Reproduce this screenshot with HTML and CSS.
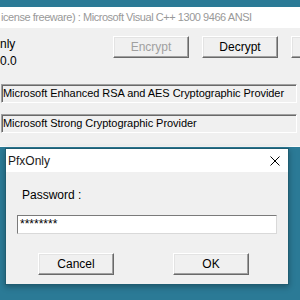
FILE: index.html
```html
<!doctype html>
<html lang="en">
<head>
    <meta charset="UTF-8">
    <title>PfxOnly</title>
    <link rel="stylesheet" href="styles.css">
</head>
<body>
    <div class="desktop">
        <!-- main window, only partly visible -->
        <div class="main-win">
            <div class="main-title">icense freeware) : Microsoft Visual C++ 1300 9466 ANSI</div>
            <div class="main-body">
                <div class="top-row">
                    <div class="info">
                        <div>nly</div>
                        <div>0.0</div>
                    </div>
                    <div class="btn btn-disabled">Encrypt</div>
                    <div class="btn">Decrypt</div>
                    <div class="btn btn-cut"></div>
                </div>
                <div class="field">Microsoft Enhanced RSA and AES Cryptographic Provider</div>
                <div class="field field-second">Microsoft Strong Cryptographic Provider</div>
            </div>
        </div>

        <!-- password dialog -->
        <div class="dialog">
            <div class="dialog-title">
                <span>PfxOnly</span>
                <svg class="close" width="10" height="10" viewBox="0 0 10 10">
                    <path d="M0.5 0.5 L9.5 9.5 M9.5 0.5 L0.5 9.5" stroke="#000" stroke-width="1" fill="none"/>
                </svg>
            </div>
            <div class="dialog-body">
                <div class="label">Password :</div>
                <div class="edit">********</div>
                <div class="dialog-buttons">
                    <div class="btn">Cancel</div>
                    <div class="btn">OK</div>
                </div>
            </div>
        </div>
    </div>
</body>
</html>
```

FILE: styles.css
```css
html, body {
    margin: 0;
    padding: 0;
}

body {
    width: 300px;
    height: 300px;
    overflow: hidden;
    background-color: #2b7a96;
    font-family: "Liberation Sans", Arial, sans-serif;
    font-size: 12px;
    color: #000;
}

.desktop {
    position: relative;
    width: 300px;
    height: 300px;
}

.main-win {
    padding-top: 7px;
    width: 300px;
    overflow: hidden;
}

/* inactive title bar, text runs off the left edge */
.main-title {
    height: 21px;
    line-height: 21px;
    background-color: #fff;
    color: #999;
    padding-left: 1px;
    white-space: nowrap;
    font-size: 11px;
    letter-spacing: -0.45px;
}

.main-body {
    height: 118px;
    background-color: #f0f0f0;
    border-bottom: 1px solid #fafafa;
    overflow: hidden;
}

.top-row {
    display: flex;
    margin-top: 8px;
    white-space: nowrap;
}

.info {
    flex: none;
    width: 113px;
    line-height: 17px;
}

.btn {
    flex: none;
    width: 76px;
    height: 22px;
    box-sizing: border-box;
    line-height: 20px;
    text-align: center;
    background-color: #f0f0f0;
    border: 1px solid;
    border-color: #fff #696969 #696969 #fff;
    box-shadow: inset -1px -1px 0 #a0a0a0, inset 1px 1px 0 #e3e3e3;
}

.top-row .btn {
    margin-right: 13px;
}

.btn-disabled {
    color: #a0a0a0;
}

.field {
    margin: 14px 3px 0 1px;
    height: 19px;
    box-sizing: border-box;
    line-height: 17px;
    padding-left: 1px;
    font-size: 11px;
    letter-spacing: -0.05px;
    white-space: nowrap;
    overflow: hidden;
    border: 1px solid;
    border-color: #a0a0a0 #fff #fff #a0a0a0;
    box-shadow: inset 1px 1px 0 #696969;
    background-color: #f0f0f0;
}

.field-second {
    margin-top: 11px;
}

.dialog {
    position: absolute;
    left: 5px;
    top: 148px;
    width: 284px;
    height: 137px;
    box-sizing: border-box;
    border: 1px solid #1f5d72;
    background-color: #f0f0f0;
    box-shadow: 0 2px 6px rgba(0, 0, 0, 0.3);
}

.dialog-title {
    display: flex;
    align-items: center;
    justify-content: space-between;
    height: 23px;
    padding: 0 8px 0 2px;
    background-color: #fff;
    font-size: 12px;
    color: #1a1a1a;
}

.close {
    display: block;
}

.dialog-body {
    padding: 14px 11px 0 11px;
}

.label {
    margin-left: 5px;
    line-height: 18px;
}

.edit {
    margin-top: 11px;
    height: 19px;
    box-sizing: border-box;
    line-height: 17px;
    padding-left: 2px;
    background-color: #fff;
    border: 1px solid #7a7a7a;
    border-right-color: #d9d9d9;
    border-bottom-color: #d9d9d9;
}

.dialog-buttons {
    display: flex;
    margin-top: 19px;
    padding-left: 21px;
    gap: 59px;
}
```
